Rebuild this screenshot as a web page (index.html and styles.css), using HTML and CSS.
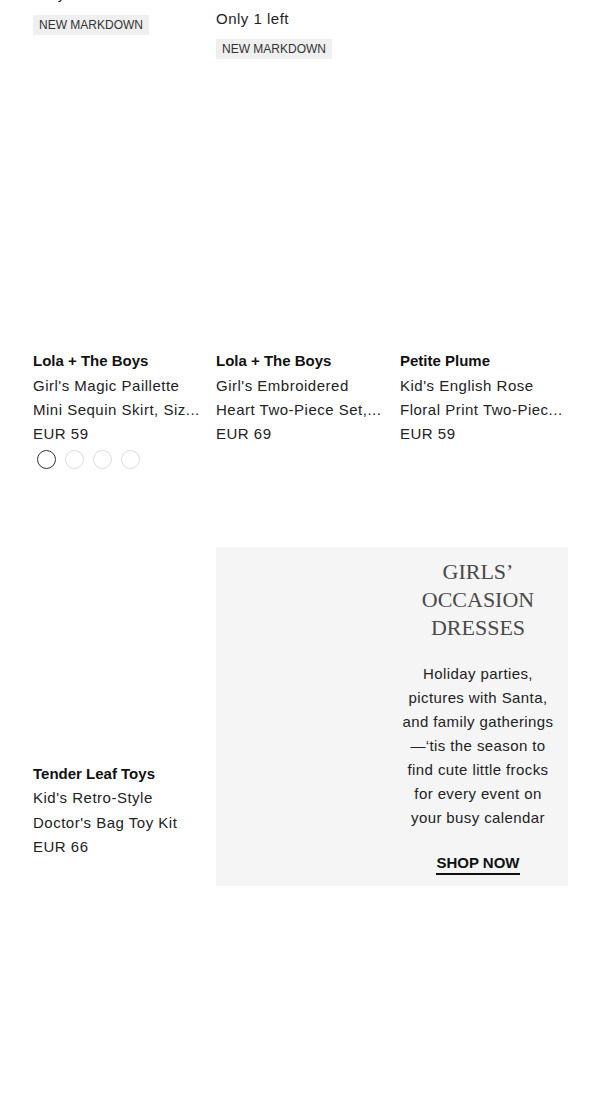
FILE: index.html
```html
<!DOCTYPE html>
<html lang="en">
<head>
<meta charset="utf-8">
<title>Girls' Clothing</title>
<link rel="stylesheet" href="styles.css">
</head>
<body>
<main class="grid">
  <div class="tile tile-partial">
    <div class="line price">EUR 45</div>
    <div class="line stock">Only 1 left</div>
    <span class="badge">NEW MARKDOWN</span>
  </div>
  <div class="tile tile-partial">
    <div class="line price">EUR 79</div>
    <div class="line muted">EUR 115 EUR 79 <span class="teal">69</span></div>
    <div class="line stock">Only 1 left</div>
    <span class="badge">NEW MARKDOWN</span>
  </div>
  <div class="tile tile-partial">
    <div class="line price">EUR 89</div>
    <div class="line muted">EUR 120</div>
  </div>

  <div class="tile">
    <div class="img"></div>
    <div class="info">
      <div class="brand">Lola + The Boys</div>
      <div class="name">Girl's Magic Paillette Mini Sequin Skirt, Siz...</div>
      <div class="line price">EUR 59</div>
      <div class="swatches">
        <span class="sw sel"></span><span class="sw"></span><span class="sw"></span><span class="sw"></span>
      </div>
    </div>
  </div>
  <div class="tile">
    <div class="img"></div>
    <div class="info">
      <div class="brand">Lola + The Boys</div>
      <div class="name">Girl's Embroidered Heart Two-Piece Set,...</div>
      <div class="line price">EUR 69</div>
    </div>
  </div>
  <div class="tile">
    <div class="img"></div>
    <div class="info">
      <div class="brand">Petite Plume</div>
      <div class="name">Kid's English Rose Floral Print Two-Piec...</div>
      <div class="line price">EUR 59</div>
    </div>
  </div>

  <div class="tile">
    <div class="img"></div>
    <div class="info">
      <div class="brand">Tender Leaf Toys</div>
      <div class="name">Kid's Retro-Style Doctor's Bag Toy Kit</div>
      <div class="line price">EUR 66</div>
    </div>
  </div>
  <section class="promo">
    <div class="promo-media"></div>
    <div class="promo-copy">
      <h2 class="promo-title">GIRLS’ OCCASION DRESSES</h2>
      <p class="promo-text">Holiday parties, pictures with Santa, and family gatherings —‘tis the season to find cute little frocks for every event on your busy calendar</p>
      <a class="promo-link" href="#">SHOP NOW</a>
    </div>
  </section>
</main>
</body>
</html>
```

FILE: styles.css
```css
html, body {
  margin: 0;
  padding: 0;
  background: #fff;
}
body {
  font-family: "Liberation Sans", Arial, sans-serif;
  color: #222;
  overflow: hidden;
  height: 1118px;
}
.grid {
  display: grid;
  grid-template-columns: 167px 168px 168px;
  column-gap: 16px;
  row-gap: 75px;
  padding: 0 22px 0 33px;
  margin-top: -42px;
  align-items: start;
}
.tile {
  display: flex;
  flex-direction: column;
  align-items: flex-start;
  min-width: 0;
}
.img {
  width: 100%;
  height: 210px;
  background: #fff;
}
.info {
  padding-top: 5px;
  width: 100%;
}
.line, .brand, .name {
  font-size: 15px;
  line-height: 24.4px;
  letter-spacing: 0.5px;
  white-space: nowrap;
}
.name {
  white-space: normal;
  color: #222;
}
.brand {
  font-weight: 700;
  color: #111;
  letter-spacing: 0;
}
.price, .stock {
  color: #222;
}
.muted {
  color: #d2d2d2;
}
.teal {
  color: #b5e0d9;
}
.badge {
  display: inline-block;
  margin-top: 8px;
  background: #efefef;
  color: #333;
  font-size: 12px;
  line-height: 20px;
  letter-spacing: 0;
  padding: 0 6px;
}
.swatches {
  display: flex;
  gap: 9px;
  align-items: center;
  height: 25px;
  padding-left: 4px;
}
.sw {
  width: 17px;
  height: 17px;
  border-radius: 50%;
  border: 1px solid #dcdcdc;
  background: #fff;
}
.sw.sel {
  border: 1.5px solid #333;
}
.promo {
  grid-column: 2 / 4;
  height: 339px;
  background: #f5f5f5;
  display: flex;
}
.promo-media {
  flex: 1;
}
.promo-copy {
  width: 158px;
  margin-right: 11px;
  padding-top: 11px;
  display: flex;
  flex-direction: column;
  align-items: center;
  text-align: center;
}
.promo-title {
  margin: 0;
  font-family: "Liberation Serif", "Times New Roman", serif;
  font-weight: 400;
  font-size: 22px;
  line-height: 28px;
  color: #4a4a4a;
  letter-spacing: 0;
  width: 130px;
}
.promo-text {
  margin: 20px 0 0;
  font-size: 15px;
  line-height: 24px;
  letter-spacing: 0.4px;
  color: #222;
}
.promo-link {
  margin-top: 23px;
  font-size: 15px;
  font-weight: 700;
  line-height: 20px;
  color: #111;
  text-decoration: none;
  border-bottom: 2px solid #111;
  letter-spacing: 0;
}
```
